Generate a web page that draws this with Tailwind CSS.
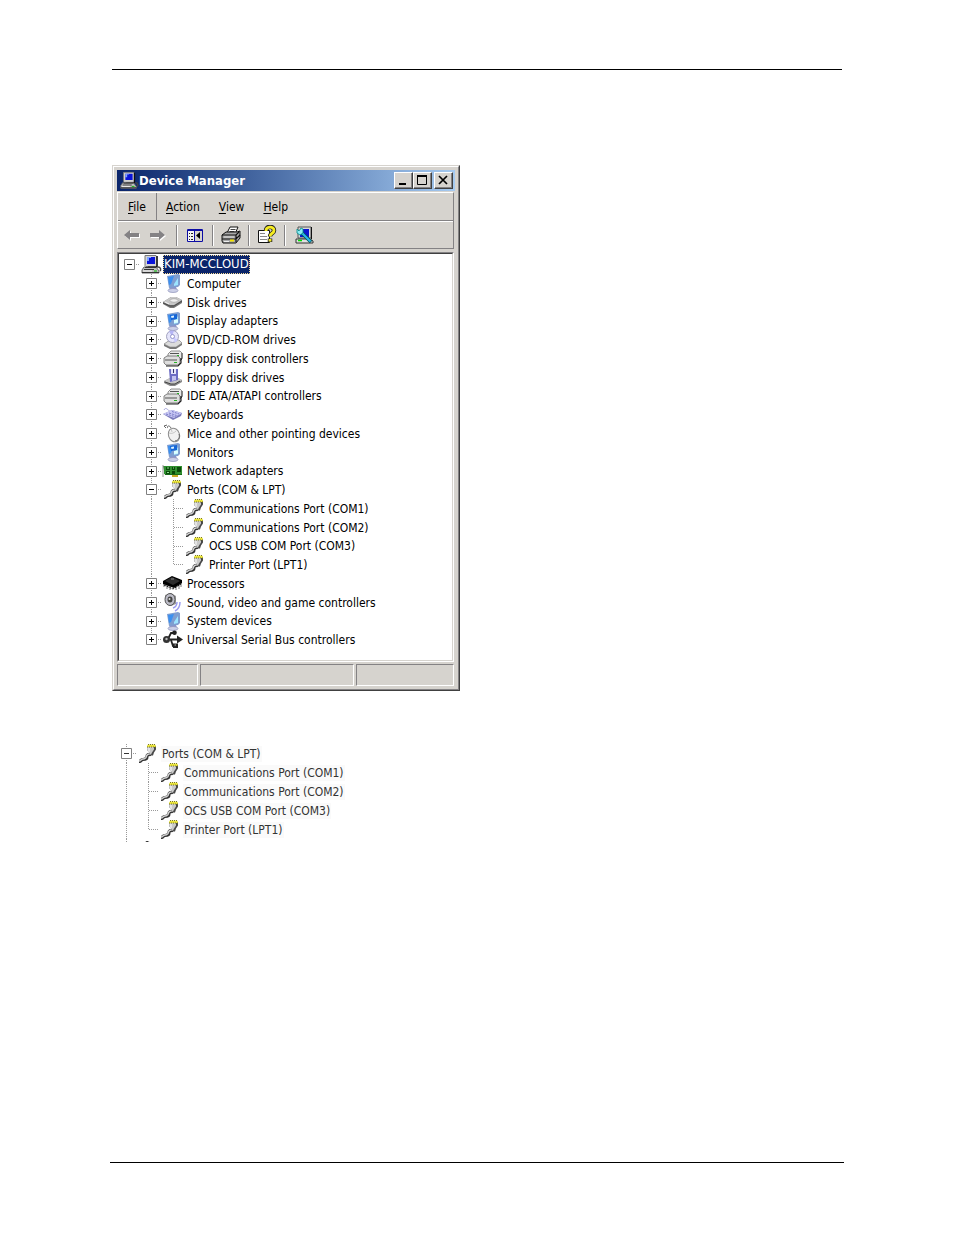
<!DOCTYPE html>
<html lang="en">
<head>
  <meta charset="UTF-8" />
  <meta name="viewport" content="width=device-width, initial-scale=1.0"/>
  <title>Device Manager</title>
  <script src="https://cdn.jsdelivr.net/npm/@tailwindcss/browser@4"></script>
</head>
<body class="flex min-h-screen flex-col bg-white px-[110px] font-['DejaVu_Sans_Condensed','DejaVu_Sans',sans-serif] text-[12px] leading-[16px] text-black">

  <!-- tree guides (22x19 cells) and icons -->
  <svg class="hidden" aria-hidden="true">
    <defs>
      <linearGradient id="blue" x1="0" y1="0" x2="1" y2="1">
        <stop offset="0" stop-color="#2f8ff0"/><stop offset=".55" stop-color="#7fd0ff"/><stop offset="1" stop-color="#3a86e0"/>
      </linearGradient>
    </defs>

    <symbol id="g-box" viewBox="0 0 22 19"><path d="M6.5 4.500h10v10h-10z" fill="#fff" stroke="#808080"/><path d="M9 9.500h5" stroke="currentColor"/></symbol>
    <symbol id="g-root" viewBox="0 0 22 19"><path d="M18 9.500h4" stroke="#999" stroke-dasharray="1 1"/><use href="#g-box" width="22" height="19"/></symbol>
    <symbol id="g-minus" viewBox="0 0 22 19"><path d="M11.500 0v19M18 9.500h4" stroke="#999" stroke-dasharray="1 1"/><use href="#g-box" width="22" height="19"/></symbol>
    <symbol id="g-plus" viewBox="0 0 22 19"><use href="#g-minus" width="22" height="19"/><path d="M11.500 7v5" stroke="currentColor"/></symbol>
    <symbol id="g-plus-end" viewBox="0 0 22 19"><path d="M11.500 0v5M18 9.500h4" stroke="#999" stroke-dasharray="1 1"/><use href="#g-box" width="22" height="19"/><path d="M11.500 7v5" stroke="currentColor"/></symbol>
    <symbol id="g-line" viewBox="0 0 22 19"><path d="M11.500 0v19" stroke="#999" stroke-dasharray="1 1"/></symbol>
    <symbol id="g-tee" viewBox="0 0 22 19"><path d="M11.500 0v19M12 9.500h11" stroke="#999" stroke-dasharray="1 1"/></symbol>
    <symbol id="g-elbow" viewBox="0 0 22 19"><path d="M11.500 0v10M12 9.500h11" stroke="#999" stroke-dasharray="1 1"/></symbol>

    <symbol id="i-pc" viewBox="0 0 22 19">
      <path d="M5 .5h11l1 1v10H6l-1-1z" fill="#d4d4d4" stroke="#777"/>
      <path d="M7 2h8v7H7z" fill="#0a14d8"/><path d="M7 2h4v1H9v3H7z" fill="#7fa4ff"/>
      <path d="M17 1v11H8" fill="none" stroke="#111" stroke-width="1.500"/>
      <path d="M4 12h12l3 4v2H2v-3z" fill="#bdbdbd" stroke="#666"/>
      <path d="M2 17.500h17M4 14.500h10M5 12.500h11" stroke="#333"/><path d="M3 16h9" stroke="#f2f2f2"/><path d="M14 16h3" stroke="#0b0"/>
      <path d="M18 12c3 0 3 3 2 4" fill="none" stroke="#444" stroke-width="1.500"/>
    </symbol>
    <symbol id="i-computer" viewBox="0 0 22 19">
      <path d="M8 13h6l1 3-5 1-3-1z" fill="#8a90cc"/>
      <ellipse cx="11" cy="16.500" rx="5" ry="2" fill="#ccd0e8" stroke="#8c90b8" stroke-width=".7"/>
      <path d="M5 2l11-2 2 1v10l-2 2-9 1z" fill="#7f9ed0"/>
      <path d="M5 2l11-2v11l-9 1z" fill="url(#blue)"/>
      <path d="M6 3l6-1-3 8-2 1z" fill="#3c90f0"/><path d="M12 10l4-6v7l-4 1z" fill="#9ce4ff"/>
    </symbol>
    <symbol id="i-display" viewBox="0 0 22 19">
      <use href="#i-computer" width="22" height="19"/>
      <path d="M8 3l7-1v5l-6 1z" fill="#1465d6"/><path d="M9 4l3-.5v2l-2.500.5z" fill="#dff4ff"/><path d="M12 8l4-.5v3l-4 .5z" fill="#dff"/>
    </symbol>
    <symbol id="i-disk" viewBox="0 0 22 19">
      <path d="M1 9l8-5h5l6 3v3l-8 5h-4l-7-4z" fill="#777"/>
      <path d="M1 9l8-5h5l6 3-8 5H8z" fill="#c8c8c8"/>
      <ellipse cx="12" cy="7.500" rx="4" ry="1.800" fill="#efefef" stroke="#999" stroke-width=".6"/>
      <path d="M1 10l7 3h4l8-5" fill="none" stroke="#4d4d4d"/><path d="M3 9l4 2" stroke="#f7f7f7"/>
    </symbol>
    <symbol id="i-dvd" viewBox="0 0 22 19">
      <path d="M2 14l6-4h9l3 3v2l-6 4H8l-6-3z" fill="#777"/>
      <path d="M2 14l6-4h9l3 3-6 4H8z" fill="#dcdcdc" stroke="#888" stroke-width=".6"/>
      <ellipse cx="10.500" cy="6.500" rx="6" ry="6" fill="#e5e5fa" stroke="#8f8fb0" stroke-width=".8"/>
      <path d="M10 6L7 1.500a6 6 0 0 1 5-.8z" fill="#b5b5f5"/><path d="M11 7l5 3-3 2.500z" fill="#c7c7ff"/>
      <circle cx="10.500" cy="6.500" r="2" fill="#fff" stroke="#8080c0" stroke-width=".8"/>
    </symbol>
    <symbol id="i-controller" viewBox="0 0 22 19">
      <path d="M6 5l3-3h9l2 2v5l-2 2H6z" fill="#e9e9e9" stroke="#777" stroke-width=".8"/>
      <path d="M20 4v6l-2 2" fill="none" stroke="#444"/>
      <path d="M2 9l3-2h11l2 2v5l-2 2H4l-2-2z" fill="#dedede" stroke="#666" stroke-width=".8"/>
      <path d="M4 17h12l3-3V9" fill="none" stroke="#222" stroke-width="1.200"/>
      <path d="M3 11h12M8 4.500h9" stroke="#555"/><path d="M12 13.500h3M15 6.500h2" stroke="#24b324"/>
    </symbol>
    <symbol id="i-floppy" viewBox="0 0 22 19">
      <path d="M2 13l6-3h8l4 2v2l-7 4H8l-6-3z" fill="#888"/>
      <path d="M2 13l6-3h8l4 2-7 4H8z" fill="#c6c6c6"/><path d="M3 14l6 2h4l5-3" fill="none" stroke="#444"/>
      <path d="M7 1h9v11l-8 2z" fill="#6d6dc4"/><path d="M9 1h5v5H9z" fill="#e6e6fa"/>
      <path d="M11 1h1v4h-1z" fill="#33336e"/><path d="M10 8h4v4l-4 1z" fill="#c3c3ee"/>
    </symbol>
    <symbol id="i-keyboard" viewBox="0 0 22 19">
      <path d="M2 5c2-4 4 1 6 1" fill="none" stroke="#a8a8dc"/>
      <path d="M1 9l9-4 10 3-1 3-8 4z" fill="#7c7cbc"/><path d="M1 9l9-4 10 3-8 5z" fill="#c8c8f4"/>
      <path d="M4 9l10 3M7 8l9 3M10 6.500l7 2.500" stroke="#7c7cc8" stroke-dasharray="2 1"/>
    </symbol>
    <symbol id="i-mouse" viewBox="0 0 22 19">
      <path d="M9 4C7 0 4 3 6 4M5 1L2 2l2 2" fill="none" stroke="#666"/>
      <ellipse cx="12" cy="11" rx="5.500" ry="7" fill="#f1f1f1" stroke="#8a8a8a" transform="rotate(-20 12 11)"/>
      <path d="M7 9c3 1 5 0 7-2M10 8L9 4" fill="none" stroke="#bbb" stroke-width=".8"/>
      <path d="M13 17c4-1 5-4 4-7" fill="none" stroke="#666"/>
    </symbol>
    <symbol id="i-network" viewBox="0 0 22 19">
      <path d="M1 4h19v9H3z" fill="#176b17"/><path d="M2 4h18v8H2z" fill="#2f8f2f"/>
      <path d="M4 5h4v3H4zM10 5h3v3h-3zM4 9h4v3H4zM10 9h3v3h-3zM15 5h4v5h-4z" fill="#0b4a0b"/>
      <path d="M5 6h2M11 6h1M5 10.500h2" stroke="#8ee08e"/><path d="M10 13h6v2h-6z" fill="#c9a928"/><path d="M1 3v12" stroke="#999"/>
    </symbol>
    <symbol id="i-port" viewBox="0 0 22 19">
      <path d="M2 17.500c2 0 2-2 4-2 3 0 4-1 4-3s1-2 4-2" fill="none" stroke="#333" stroke-width="3.200"/>
      <path d="M2 17c2 0 2-2 4-2 3 0 3-1 3.500-3S11 10 13 10" fill="none" stroke="#d2d2d2" stroke-width="1.500"/>
      <path d="M10 2.500h9v3l-2 3-1 3h-3l-1-3-2-3z" fill="#484848"/>
      <path d="M10 2.500h7v3l-2 3-1 2h-1l-1-2-2-3z" fill="#c9c9c9"/><path d="M12 4v4" stroke="#fff"/>
      <path d="M10 3V1.500L11 .5h7l1 1V3z" fill="#ece63a"/><path d="M11 .5h8M10 3h9" stroke="#77752a" stroke-dasharray="1 1"/>
    </symbol>
    <symbol id="i-chip" viewBox="0 0 22 19">
      <path d="M2 9v4M5 10v5M8 12v4M14 12v4M17 10v5M19 9v4" stroke="#777"/>
      <path d="M1 7l9-5 10 4v3l-8 5L1 10z" fill="#000"/><path d="M3 7l7-4 8 4-7 4z" fill="#2c2c2c"/><path d="M9 5h3" stroke="#888"/>
      <path d="M2 11l9 4 8-5" fill="none" stroke="#111" stroke-dasharray="2 1"/>
    </symbol>
    <symbol id="i-sound" viewBox="0 0 22 19">
      <path d="M3 2l6-2 5 3v8l-5 2-6-4z" fill="#9a9a9a"/>
      <ellipse cx="8" cy="6.500" rx="5" ry="6" fill="#bdbdc8" stroke="#555"/><ellipse cx="8" cy="6.500" rx="2.500" ry="3" fill="#444"/><circle cx="7.500" cy="6" r="1" fill="#ddd"/>
      <path d="M11 15c3-1 4-3 4-6M13 18c4-2 5-5 5-9" fill="none" stroke="#9c9cf0" stroke-width="1.500"/>
    </symbol>
    <symbol id="i-usb" viewBox="0 0 22 19">
      <path d="M4 9.500h13M6 9l3-6h3M9 10l2 6h3" fill="none" stroke="#222" stroke-width="1.800"/>
      <circle cx="4.500" cy="9.500" r="3.500" fill="#333"/><circle cx="4.500" cy="9" r="1.200" fill="#bbb"/>
      <path d="M15 5.500l6 4-6 4z" fill="#222"/><circle cx="12.500" cy="2.800" r="2.300" fill="#222"/><path d="M11 13.500h5V18h-5z" fill="#222"/><path d="M12.500 15h1.500" stroke="#bbb"/>
    </symbol>
  </svg>

  <header class="mx-[2px] h-[70px] border-b border-black"></header>

  <main class="mx-[2px] pt-[95px]">
    <section class="w-[348px] border border-t-[#d6d3ce] border-l-[#d6d3ce] border-r-[#404040] border-b-[#404040]" aria-label="Device Manager">
      <div class="border border-t-white border-l-white border-r-[#848284] border-b-[#848284] bg-[#d6d3ce] p-[3px]">

        <div class="flex h-[21px] items-center bg-linear-to-r from-[#0a246a] to-[#a6caf0] px-[2px]">
          <svg class="h-[19px] w-[20px]" viewBox="0 0 22 19" aria-hidden="true"><use href="#i-pc"/></svg>
          <h1 class="flex-1 text-[13px] font-bold text-white">Device Manager</h1>
          <button aria-label="Minimize" class="flex h-[17px] w-[19px] items-end justify-center border border-t-white border-l-white border-r-[#404040] border-b-[#404040] bg-[#d6d3ce] shadow-[inset_-1px_-1px_#848284]">
            <svg class="h-[15px] w-[17px]" viewBox="0 0 17 15"><path d="M4 11h7" stroke="#000" stroke-width="2"/></svg>
          </button>
          <button aria-label="Maximize" class="flex h-[17px] w-[19px] items-center justify-center border border-t-white border-l-white border-r-[#404040] border-b-[#404040] bg-[#d6d3ce] shadow-[inset_-1px_-1px_#848284]">
            <svg class="h-[15px] w-[17px]" viewBox="0 0 17 15"><path d="M3.500 3v8.500h9V3M3 3h10" fill="none" stroke="#000"/><path d="M3 3h10" stroke="#000" stroke-width="2"/></svg>
          </button>
          <button aria-label="Close" class="ml-[2px] flex h-[17px] w-[19px] items-center justify-center border border-t-white border-l-white border-r-[#404040] border-b-[#404040] bg-[#d6d3ce] shadow-[inset_-1px_-1px_#848284]">
            <svg class="h-[15px] w-[17px]" viewBox="0 0 17 15"><path d="M4 3l8 8M12 3l-8 8" stroke="#000" stroke-width="1.700"/></svg>
          </button>
        </div>

        <div class="mt-px mr-px border border-t-white border-l-white border-r-[#848284] border-b-[#848284]">
          <nav class="flex h-[28px] items-stretch border-b border-[#848284]">
            <button class="border-r border-[#848284] px-[10px]"><u class="underline-offset-2">F</u>ile</button>
            <button class="px-[9px]"><u class="underline-offset-2">A</u>ction</button>
            <button class="px-[10px]"><u class="underline-offset-2">V</u>iew</button>
            <button class="px-[9px]"><u class="underline-offset-2">H</u>elp</button>
          </nav>
          <div class="flex h-[27px] items-center border-t border-white pl-[5px]">
            <button aria-label="Back" class="w-[18px]"><svg class="h-[14px] w-[18px]" viewBox="0 0 18 14"><path d="M2 8l6-5v3h9v4H8v3z" fill="#fff"/><path d="M1 7l6-5v3h9v4H7v3z" fill="#848284"/></svg></button>
            <button aria-label="Forward" class="ml-[8px] w-[18px]"><svg class="h-[14px] w-[18px]" viewBox="0 0 18 14"><path d="M17 8l-6-5v3H2v4h9v3z" fill="#fff"/><path d="M16 7l-6-5v3H1v4h9v3z" fill="#848284"/></svg></button>
            <span class="ml-[9px] h-[21px] w-[2px] border-l border-r border-l-[#848284] border-r-white"></span>
            <button aria-label="Show/Hide Console Tree" class="ml-[8px] w-[18px]">
              <svg class="h-[18px] w-[18px]" viewBox="0 0 18 18"><path d="M1 3h16v13H1z" fill="#f4f4f4"/><path d="M1.500 3.500h15v12h-15zM1 4.500h16M8.500 4v12" fill="none" stroke="#0c0ca4"/><path d="M3 7.500h1M5 7.500h2M3 10.500h1M5 10.500h2M3 13.500h1M5 13.500h2" stroke="#222"/><path d="M9 5h7v10H9z" fill="#d6d3ce"/><path d="M14 6v7l-4-3.500z" fill="#000"/></svg>
            </button>
            <span class="ml-[8px] h-[21px] w-[2px] border-l border-r border-l-[#848284] border-r-white"></span>
            <button aria-label="Print" class="ml-[6px] w-[22px]">
              <svg class="h-[20px] w-[22px]" viewBox="0 0 22 20"><path d="M7 8l3-6h8l-3 7z" fill="#fff" stroke="#111"/><path d="M10.500 4.500h5M9.500 6.500h5" stroke="#444"/><path d="M2 10l4-3h11l3-1v7l-4 5H3l-1-2z" fill="#a8a8a8" stroke="#111"/><path d="M2 10h14l3-3M2 14h14l4-4M16 10v7" fill="none" stroke="#111" stroke-width="1.200"/><path d="M4 12h10" stroke="#ddd"/><path d="M10 15.500h4" stroke="#f4e300" stroke-width="2"/><path d="M4 16.500h5" stroke="#eee"/></svg>
            </button>
            <span class="ml-[6px] h-[21px] w-[2px] border-l border-r border-l-[#848284] border-r-white"></span>
            <button aria-label="Help" class="ml-[7px] w-[20px]">
              <svg class="h-[20px] w-[20px]" viewBox="0 0 20 20"><path d="M1.500 5.500h11v12h-11z" fill="#fff" stroke="#111"/><path d="M3 8.500h5M3 11.500h7M3 14.500h7" stroke="#888"/><path d="M9 5.500c0-5 8-5 8 0 0 3-4 2.500-4 6M13 13.500v3.500" fill="none" stroke="#222" stroke-width="4.500"/><path d="M9 6c0-5 8-5 8-.5 0 3-4 2.500-4 6M13 14v2.500" fill="none" stroke="#f6ec22" stroke-width="2.800"/></svg>
            </button>
            <span class="ml-[7px] h-[21px] w-[2px] border-l border-r border-l-[#848284] border-r-white"></span>
            <button aria-label="Scan for hardware changes" class="ml-[8px] w-[20px]">
              <svg class="h-[20px] w-[20px]" viewBox="0 0 20 20"><path d="M4 2h13v11H4z" fill="#d8d8d8" stroke="#555"/><path d="M6 4h9v8H6z" fill="#0b14d0"/><path d="M17.500 2v12" stroke="#111"/><path d="M2 14h14l3 2v2H2z" fill="#e0e0e0" stroke="#333"/><path d="M4 15.500h4" stroke="#0d0" stroke-width="1.500"/><path d="M7 7l10 10" stroke="#055" stroke-width="3.500"/><path d="M7 7l9.500 9.500" stroke="#27b8f0" stroke-width="2"/><path d="M3 4l2 2 2-3 2 1v4L6 10 3 8z" fill="#8cecf4" stroke="#088" stroke-width=".8"/></svg>
            </button>
          </div>
        </div>

        <div class="mt-[3px] mr-px border border-t-[#848284] border-l-[#848284] border-r-white border-b-white">
          <div class="border border-t-[#404040] border-l-[#404040] border-r-[#d6d3ce] border-b-[#d6d3ce] bg-white pt-px pb-[11px]">
            <ul id="tree" role="tree" aria-label="Devices" class="-ml-px"></ul>
          </div>
        </div>

        <div class="mt-[2px] mr-px flex h-[22px] gap-[2px]">
          <div class="w-[81px] border border-t-[#848284] border-l-[#848284] border-r-white border-b-white"></div>
          <div class="flex-1 border border-t-[#848284] border-l-[#848284] border-r-white border-b-white"></div>
          <div class="w-[98px] border border-t-[#848284] border-l-[#848284] border-r-white border-b-white"></div>
        </div>
      </div>
    </section>

    <section class="mt-[53px] ml-[3px] w-[241px] text-[#333]" aria-label="Ports">
      <ul id="ports" role="tree" aria-label="Ports"></ul>
      <div class="flex h-[3px] overflow-hidden">
        <svg class="h-[19px] w-[22px] shrink-0"><use href="#g-line"/></svg>
        <svg class="h-[19px] w-[22px] shrink-0"><use href="#i-chip"/></svg>
      </div>
    </section>
  </main>

  <footer class="mt-auto h-[73px] border-t border-black"></footer>

  <script>
    // [guides, icon, label]
    const ports = [
      [['minus'], 'port', 'Ports (COM & LPT)'],
      [['line', 'tee'], 'port', 'Communications Port (COM1)'],
      [['line', 'tee'], 'port', 'Communications Port (COM2)'],
      [['line', 'tee'], 'port', 'OCS USB COM Port (COM3)'],
      [['line', 'elbow'], 'port', 'Printer Port (LPT1)'],
    ];

    const devices = [
      [['plus'], 'computer', 'Computer'],
      [['plus'], 'disk', 'Disk drives'],
      [['plus'], 'display', 'Display adapters'],
      [['plus'], 'dvd', 'DVD/CD-ROM drives'],
      [['plus'], 'controller', 'Floppy disk controllers'],
      [['plus'], 'floppy', 'Floppy disk drives'],
      [['plus'], 'controller', 'IDE ATA/ATAPI controllers'],
      [['plus'], 'keyboard', 'Keyboards'],
      [['plus'], 'mouse', 'Mice and other pointing devices'],
      [['plus'], 'display', 'Monitors'],
      [['plus'], 'network', 'Network adapters'],
      ...ports,
      [['plus'], 'chip', 'Processors'],
      [['plus'], 'sound', 'Sound, video and game controllers'],
      [['plus'], 'computer', 'System devices'],
      [['plus-end'], 'usb', 'Universal Serial Bus controllers'],
    ];

    function guide(name, label) {
      const svg = `<svg class="block h-[19px] w-[22px]"><use href="#g-${name}"/></svg>`;
      if (/root|plus|minus/.test(name)) {
        return `<button class="h-full w-[22px] shrink-0 overflow-hidden" aria-label="Toggle ${label}">${svg}</button>`;
      }
      return `<span class="h-full w-[22px] shrink-0 overflow-hidden">${svg}</span>`;
    }

    function row([guides, icon, text], rowClass, labelClass) {
      const label = text.replace('&', '&amp;');
      return `<li role="treeitem" aria-level="${guides.length}" class="${rowClass}">
        ${guides.map(g => guide(g, label)).join('')}
        <svg class="h-[19px] w-[22px] shrink-0"><use href="#i-${icon}"/></svg>
        <span class="${labelClass}">${label}</span>
      </li>`;
    }

    const rowClass = 'flex h-[19px] items-center nth-[4n]:h-[18px]';
    const plain = 'ml-[2px] px-px whitespace-nowrap';
    const selected = 'ml-px h-[19px] px-px text-[13px] leading-[18px] whitespace-nowrap bg-[#0a246a] text-white outline-1 outline-dotted -outline-offset-1 outline-[#f5db95]';

    document.getElementById('tree').innerHTML =
      row([['root'], 'pc', 'KIM-MCCLOUD'], rowClass, selected) +
      devices.map(d => row(d, rowClass + ' pl-[22px]', plain)).join('');

    document.getElementById('ports').innerHTML =
      ports.map(p => row(p, 'flex h-[19px] items-center', plain + ' bg-[#fafafa]')).join('');
  </script>
</body>
</html>
